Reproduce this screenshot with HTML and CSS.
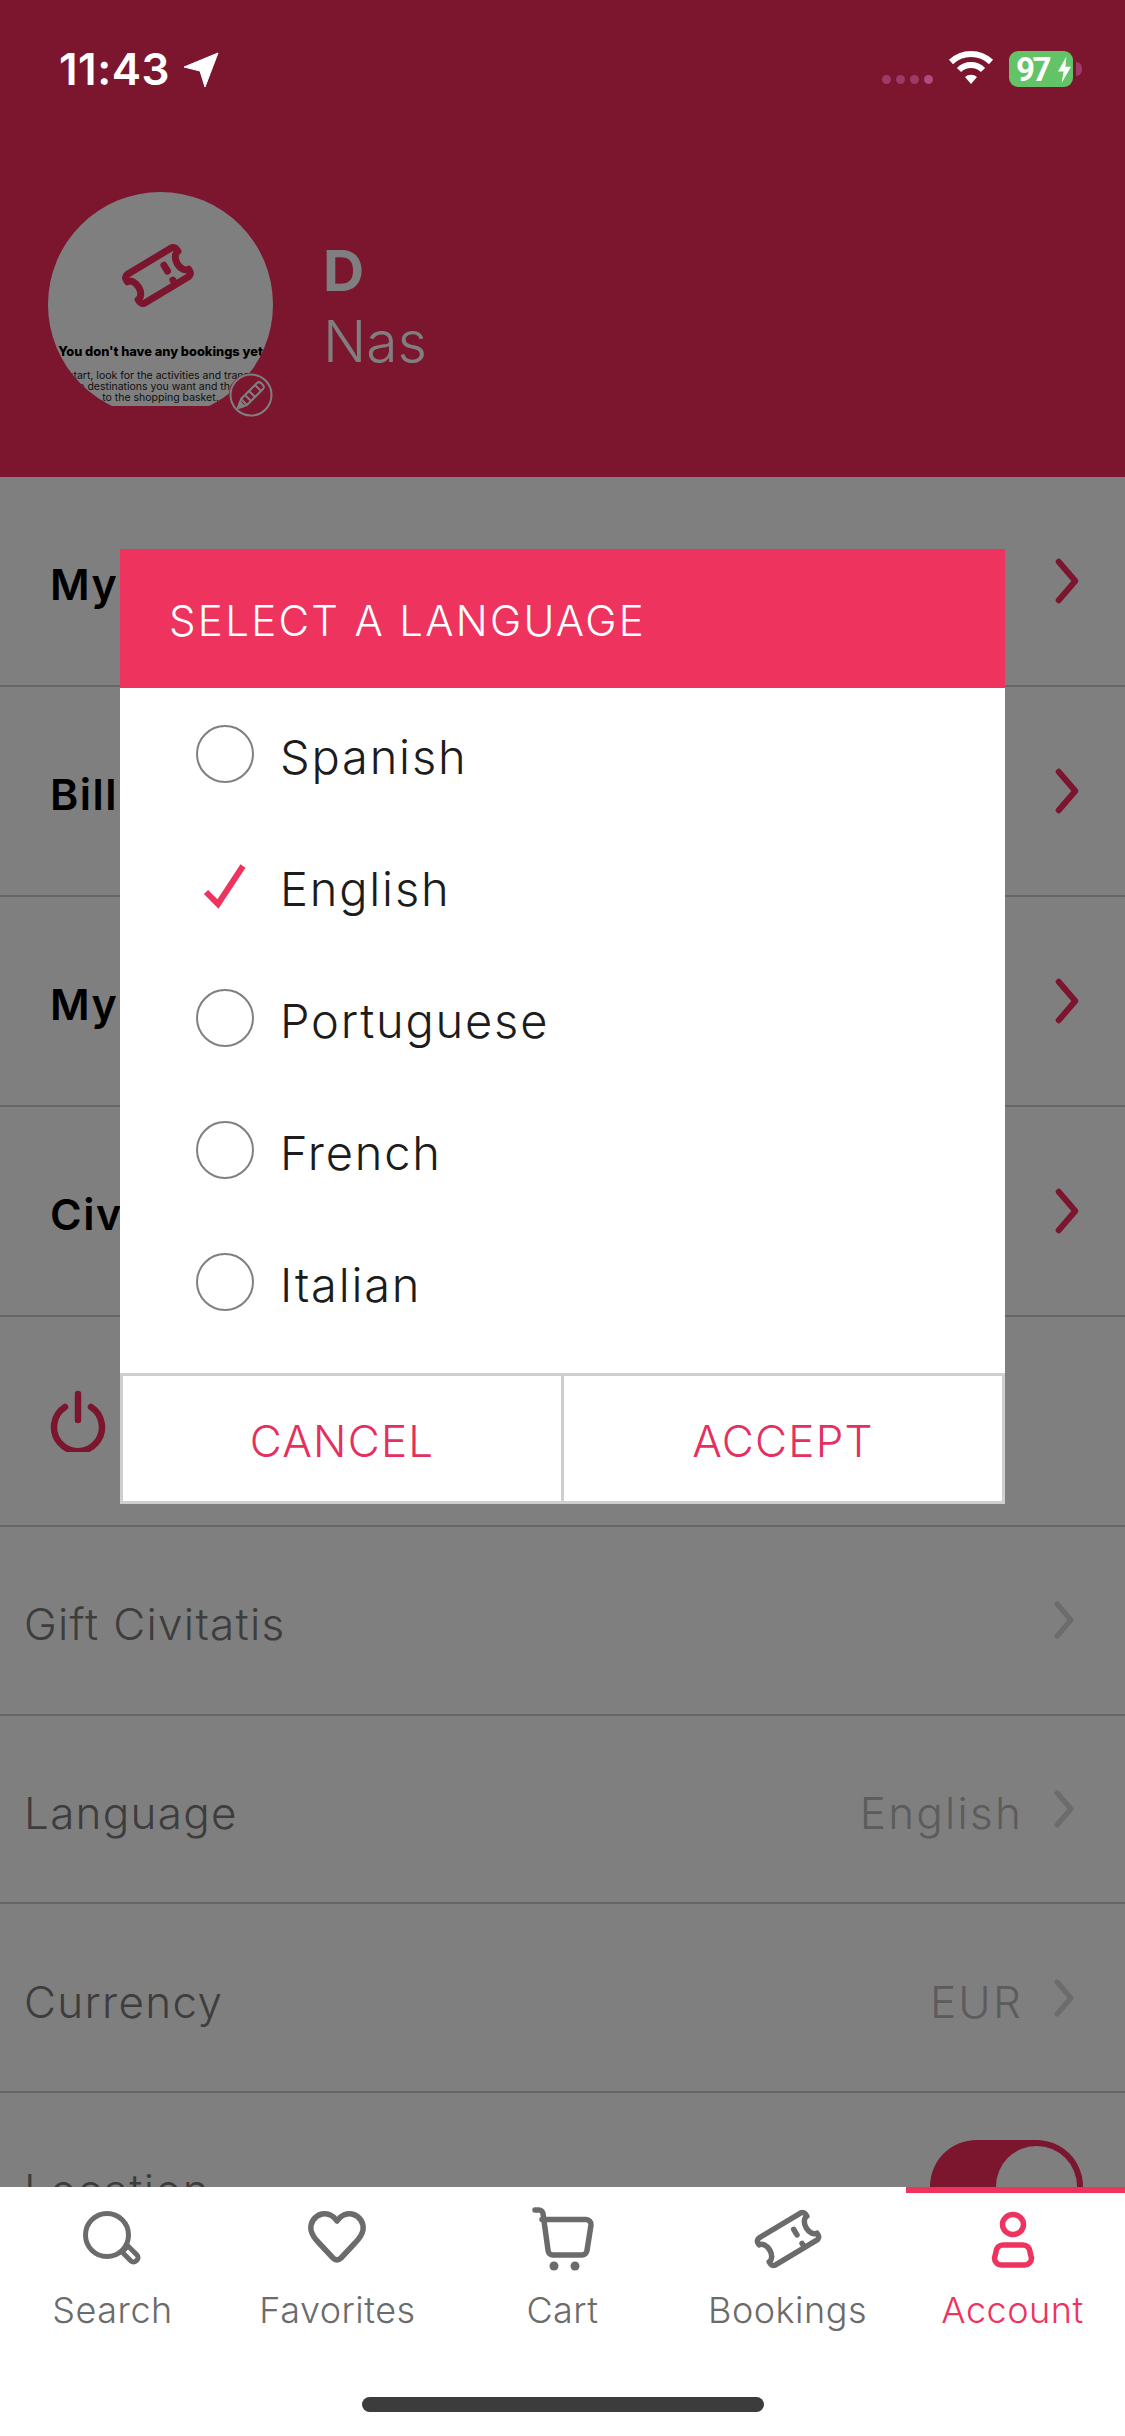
FILE: index.html
```html
<!DOCTYPE html>
<html lang="en">
<head>
    <meta charset="UTF-8">
    <meta name="viewport" content="width=device-width, initial-scale=1.0">
    <title>Account</title>
    <link rel="stylesheet" href="styles.css">
</head>
<body>

    <svg class="defs" width="0" height="0">
        <symbol id="ticket" viewBox="0 0 64 54">
            <g transform="rotate(-31 32 27)" fill="none" stroke="currentColor" stroke-linecap="round" stroke-linejoin="round">
                <path d="M10 12.500 H54 a3.500 3.500 0 0 1 3.500 3.500 v2 a6 9 0 0 0 0 18 v2 a3.500 3.500 0 0 1 -3.500 3.500 H10 a3.500 3.500 0 0 1 -3.500 -3.500 v-2 a6 9 0 0 0 0 -18 v-2 a3.500 3.500 0 0 1 3.500 -3.500 Z"/>
                <path d="M41 22 v6 M41 37 v1"/>
            </g>
        </symbol>
        <symbol id="chevron" viewBox="0 0 26 50">
            <path d="M4 4 L22 25 L4 46" fill="none" stroke="currentColor" stroke-linecap="round" stroke-linejoin="round"/>
        </symbol>
    </svg>

    <div class="screen">
        <div class="content">
            <!-- Cabecera con la foto -->
            <div class="profile">
                <div class="avatar-wrap">
                    <div class="avatar">
                        <div class="avatar-shot">
                            <svg class="avatar-ticket"><use href="#ticket"/></svg>
                            <div class="avatar-title">You don't have any bookings yet</div>
                            <div class="avatar-text">To start, look for the activities and transfers<br>in the destinations you want and then add<br>to the shopping basket.</div>
                        </div>
                    </div>
                    <div class="avatar-edit">
                        <svg viewBox="0 0 44 44" width="44" height="44" fill="none" stroke="currentColor" stroke-width="2" stroke-linejoin="round">
                            <circle cx="22" cy="22" r="20.500"/>
                            <path d="M9 35 L12 26 L28 10 a3 3 0 0 1 4 0 l2 2 a3 3 0 0 1 0 4 L18 32 Z"/>
                            <path d="M12 26 L18 32 M16 22 L22 28 M20 18 L26 24 M26 12 L32 18"/>
                            <path d="M9 35 L11 29 L15 33 Z" fill="currentColor"/>
                        </svg>
                    </div>
                </div>
                <div class="profile-name">
                    <div class="first-name">D</div>
                    <div class="last-name">Nas</div>
                </div>
            </div>

            <!-- Menu principal -->
            <div class="row-big"><span>My data</span><svg class="chev-big"><use href="#chevron"/></svg></div>
            <div class="row-big"><span>Billing data</span><svg class="chev-big"><use href="#chevron"/></svg></div>
            <div class="row-big"><span>My trips</span><svg class="chev-big"><use href="#chevron"/></svg></div>
            <div class="row-big"><span>Civitatis</span><svg class="chev-big"><use href="#chevron"/></svg></div>
            <div class="row-big">
                <svg class="power" viewBox="0 0 56 62" fill="none" stroke="currentColor" stroke-width="6.500" stroke-linecap="round">
                    <path d="M15 17 A24 24 0 1 0 41 17"/>
                    <path d="M28 4 V30"/>
                </svg>
            </div>

            <!-- Ajustes -->
            <div class="row-small"><span>Gift Civitatis</span><svg class="chev-small"><use href="#chevron"/></svg></div>
            <div class="row-small"><span>Language</span><div class="row-right"><span class="row-value">English</span><svg class="chev-small"><use href="#chevron"/></svg></div></div>
            <div class="row-small"><span>Currency</span><div class="row-right"><span class="row-value">EUR</span><svg class="chev-small"><use href="#chevron"/></svg></div></div>
            <div class="row-small"><span>Location</span><div class="toggle"><div class="toggle-knob"></div></div></div>
        </div>

        <!-- Fondo oscuro y dialogo -->
        <div class="overlay">
            <div class="status-bar">
                <div class="status-left">
                    <span class="time">11:43</span>
                    <svg class="arrow" viewBox="0 0 36 36"><path d="M35 1 L22 35 L17 19 L1 15 Z" fill="#fff" stroke="#fff" stroke-width="1" stroke-linejoin="round"/></svg>
                </div>
                <div class="status-right">
                    <div class="signal"><i></i><i></i><i></i><i class="on"></i></div>
                    <svg class="wifi" viewBox="0 0 46 34" fill="none" stroke="#fff" stroke-width="6">
                        <path d="M3 11 A29 29 0 0 1 43 11"/>
                        <path d="M11 19 A17 17 0 0 1 35 19"/>
                        <path d="M17 26 L23 33 L29 26 A9 9 0 0 0 17 26 Z" fill="#fff" stroke="none"/>
                    </svg>
                    <div class="battery">
                        <span>97</span>
                        <svg viewBox="0 0 16 28" width="15" height="27"><path d="M10 0 L1 16 H7 L5 28 L15 11 H9 Z" fill="#fff"/></svg>
                    </div>
                    <div class="battery-nub"></div>
                </div>
            </div>

            <div class="dialog">
                <div class="dialog-head">SELECT A LANGUAGE</div>
                <div class="options">
                    <div class="option"><div class="radio"></div><span>Spanish</span></div>
                    <div class="option">
                        <div class="radio-checked">
                            <svg viewBox="0 0 44 46" width="44" height="46"><path d="M3 29 L15 41 L40 3" fill="none" stroke="#ee335e" stroke-width="6"/></svg>
                        </div>
                        <span>English</span>
                    </div>
                    <div class="option"><div class="radio"></div><span>Portuguese</span></div>
                    <div class="option"><div class="radio"></div><span>French</span></div>
                    <div class="option"><div class="radio"></div><span>Italian</span></div>
                </div>
                <div class="dialog-buttons">
                    <div class="dialog-btn">CANCEL</div>
                    <div class="dialog-btn">ACCEPT</div>
                </div>
            </div>
        </div>

        <!-- Barra inferior -->
        <div class="tabbar">
            <div class="tab">
                <svg class="tab-icon" viewBox="0 0 72 64" fill="none" stroke="currentColor" stroke-width="5">
                    <circle cx="30" cy="28" r="21.500"/>
                    <path d="M45 45 L51 39 L60 48 a3.500 3.500 0 0 1 0 5 l-1 1 a3.500 3.500 0 0 1 -5 0 Z" stroke-linejoin="round"/>
                </svg>
                <span>Search</span>
            </div>
            <div class="tab">
                <svg class="tab-icon icon-left" viewBox="0 0 72 64" fill="none" stroke="currentColor" stroke-width="5.500" stroke-linejoin="round">
                    <path d="M36 14 C32 8 26 6 21 7 C13 9 9 16 10 23 C11 28 14 32 18 36 L32 51 C34.500 53.500 37.500 53.500 40 51 L54 36 C58 32 61 28 62 23 C63 16 59 9 51 7 C46 6 40 8 36 14 Z"/>
                </svg>
                <span>Favorites</span>
            </div>
            <div class="tab">
                <svg class="tab-icon" viewBox="0 0 72 64" fill="none" stroke="currentColor" stroke-width="5.500" stroke-linecap="round" stroke-linejoin="round">
                    <path d="M8 3 H12 a4 4 0 0 1 4 3.500 L21 43 a5 5 0 0 0 5 5 H55 a5 5 0 0 0 5 -4.500 L64 18 a5 5 0 0 0 -5 -5.500 H15"/>
                    <circle cx="27" cy="59" r="4.500" fill="currentColor" stroke="none"/>
                    <circle cx="48" cy="59" r="4.500" fill="currentColor" stroke="none"/>
                </svg>
                <span>Cart</span>
            </div>
            <div class="tab">
                <svg class="tab-icon ticket-tab" viewBox="0 0 72 64"><use href="#ticket" x="1" y="2.500" width="70" height="59"/></svg>
                <span>Bookings</span>
            </div>
            <div class="tab active">
                <svg class="tab-icon" viewBox="0 0 72 64" fill="none" stroke="currentColor" stroke-width="5.500" stroke-linejoin="round">
                    <ellipse cx="36" cy="17.500" rx="10.500" ry="10"/>
                    <path d="M26 38 H46 a7 7 0 0 1 7 7 l1.500 6 a7 7 0 0 1 -7 7 H24.500 a7 7 0 0 1 -7 -7 L19 45 a7 7 0 0 1 7 -7 Z"/>
                </svg>
                <span>Account</span>
            </div>
            <div class="home-bar"></div>
        </div>
    </div>

</body>
</html>
```

FILE: styles.css
```css
body {
    margin: 0;
    background-color: #fff;
    font-family: Inter, "Liberation Sans", sans-serif;
    overflow: hidden;
}

.defs {
    position: absolute;
}

.screen {
    position: relative;
    width: 1125px;
    height: 2436px;
    overflow: hidden;
    display: flex;
    flex-direction: column;
}

.content {
    height: 2187px;
    overflow: hidden;
    background-color: #fff;
}

/* Cabecera */
.profile {
    height: 477px;
    box-sizing: border-box;
    padding: 192px 0 0 48px;
    background-color: #f82a5c;
    display: flex;
    align-items: flex-start;
    gap: 50px;
}

.avatar-wrap {
    position: relative;
    width: 225px;
    height: 225px;
}

.avatar {
    width: 225px;
    height: 225px;
    border-radius: 50%;
    overflow: hidden;
}

.avatar-shot {
    height: 214px;
    background-color: #fff;
    display: flex;
    flex-direction: column;
    align-items: center;
    color: #000;
    white-space: nowrap;
}

.avatar-ticket {
    width: 74px;
    height: 63px;
    margin: 52px 0 0 -5px;
    color: #f82a5c;
    stroke-width: 6;
}

.avatar-title {
    margin-top: 36px;
    font-size: 12.800px;
    font-weight: 800;
    line-height: 18px;
}

.avatar-text {
    margin-top: 9px;
    font-size: 10.500px;
    line-height: 11px;
    text-align: center;
    color: #222;
}

.avatar-edit {
    position: absolute;
    right: 0;
    bottom: 0;
    width: 44px;
    height: 44px;
    background-color: #f82a5c;
    border-radius: 50%;
    color: #fff;
}

.profile-name {
    margin-top: 43px;
    color: #fff;
    font-size: 57px;
    line-height: 71px;
}

.first-name {
    font-weight: 700;
}

.last-name {
    font-weight: 300;
}

/* Filas */
.row-big {
    height: 210px;
    box-sizing: border-box;
    padding: 0 46px 0 50px;
    background-color: #fff;
    border-bottom: 2px solid #ccc;
    display: flex;
    align-items: center;
    justify-content: space-between;
    font-size: 43px;
    font-weight: 600;
    letter-spacing: 1.500px;
    color: #000;
}

.row-big span {
    padding-top: 5px;
}

.chev-big {
    width: 24px;
    height: 46px;
    color: #f82a5c;
    stroke-width: 6.500;
}

.power {
    width: 56px;
    height: 62px;
    color: #f82a5c;
}

.row-small {
    height: 188.700px;
    box-sizing: border-box;
    padding: 0 50px 0 24px;
    background-color: #fff;
    border-bottom: 2px solid #ccc;
    display: flex;
    align-items: center;
    justify-content: space-between;
    font-size: 44px;
    font-weight: 300;
    letter-spacing: 1.300px;
    color: #7a7a7a;
}

.row-small > span,
.row-value {
    padding-top: 8px;
}

.row-right {
    display: flex;
    align-items: center;
    gap: 30px;
}

.row-value {
    color: #b8b8b8;
    letter-spacing: 2.200px;
}

.chev-small {
    width: 22px;
    height: 38px;
    color: #d8d8d8;
    stroke-width: 7;
}

.toggle {
    width: 153px;
    height: 93px;
    margin-right: -8px;
    box-sizing: border-box;
    padding: 6px;
    border-radius: 47px;
    background-color: #f82a5c;
    display: flex;
    justify-content: flex-end;
}

.toggle-knob {
    width: 81px;
    height: 81px;
    border-radius: 50%;
    background-color: #fff;
}

/* Fondo oscuro */
.overlay {
    position: absolute;
    top: 0;
    left: 0;
    width: 1125px;
    height: 2187px;
    background-color: rgba(0, 0, 0, 0.5);
}

.status-bar {
    height: 110px;
    box-sizing: border-box;
    padding: 0 43px 0 59px;
    display: flex;
    justify-content: space-between;
    color: #fff;
}

.status-left {
    display: flex;
    align-items: flex-start;
    gap: 13px;
    padding-top: 43px;
}

.time {
    font-size: 44px;
    font-weight: 600;
    line-height: 52px;
    letter-spacing: 0.5px;
}

.arrow {
    width: 36px;
    height: 36px;
    margin-top: 9px;
}

.status-right {
    display: flex;
    align-items: flex-start;
    padding-top: 51px;
}

.signal {
    display: flex;
    gap: 5px;
    margin: 24px 15px 0 0;
}

.signal i {
    width: 9px;
    height: 9px;
    border-radius: 50%;
    background-color: #9c3a68;
}

.signal i.on {
    background-color: #b04a80;
}

.wifi {
    width: 46px;
    height: 34px;
    margin-right: 15px;
}

.battery {
    width: 64px;
    height: 36px;
    box-sizing: border-box;
    padding-left: 7px;
    border-radius: 9px;
    background-color: #62c466;
    display: flex;
    align-items: center;
    gap: 8px;
    font-family: Roboto, sans-serif;
    font-size: 33px;
    font-weight: 700;
    letter-spacing: -2.500px;
}

.battery svg {
    flex-shrink: 0;
}

.battery-nub {
    width: 6px;
    height: 14px;
    margin: 11px 0 0 3px;
    border-radius: 0 7px 7px 0;
    background-color: #a03a6a;
}

/* Dialogo */
.dialog {
    width: 885px;
    margin: 439px 0 0 120px;
    background-color: #fff;
}

.dialog-head {
    height: 139px;
    box-sizing: border-box;
    padding-left: 49px;
    background-color: #ee335e;
    color: #fff;
    font-size: 42px;
    font-weight: 300;
    letter-spacing: 2.300px;
    line-height: 143px;
}

.options {
    padding-bottom: 25px;
}

.option {
    height: 132px;
    box-sizing: border-box;
    padding-left: 76px;
    display: flex;
    align-items: center;
    gap: 26px;
    font-size: 47px;
    font-weight: 300;
    letter-spacing: 1.800px;
    color: #1c1c1c;
}

.option span {
    padding-top: 5px;
}

.radio {
    width: 58px;
    height: 58px;
    box-sizing: border-box;
    border: 2px solid #808080;
    border-radius: 50%;
}

.radio-checked {
    width: 58px;
    height: 58px;
    display: flex;
    align-items: center;
    justify-content: center;
}

.dialog-buttons {
    height: 131px;
    display: flex;
}

.dialog-btn {
    flex: 1;
    box-sizing: border-box;
    border: 3px solid #cfcfcf;
    border-right-width: 0;
    padding-top: 4px;
    display: flex;
    align-items: center;
    justify-content: center;
    font-size: 44px;
    font-weight: 300;
    letter-spacing: 1.200px;
    color: #e5305f;
}

.dialog-btn:last-child {
    border-right-width: 3px;
}

/* Barra inferior */
.tabbar {
    position: relative;
    height: 249px;
    background-color: #fff;
    display: flex;
}

.tab {
    position: relative;
    width: 225px;
    height: 249px;
    box-sizing: border-box;
    padding-top: 20px;
    display: flex;
    flex-direction: column;
    align-items: center;
    color: #6b6b6b;
    font-size: 36px;
    font-weight: 300;
    letter-spacing: 0.500px;
}

.tab span {
    margin-top: 15px;
    line-height: 48px;
}

.tab-icon {
    width: 72px;
    height: 64px;
}

.icon-left {
    margin-left: -2px;
}

.ticket-tab {
    stroke-width: 5;
}

.tab.active {
    color: #ee335e;
}

.tab.active::before {
    content: "";
    position: absolute;
    top: 0;
    left: 6px;
    right: 0;
    height: 6px;
    background-color: #ee335e;
}

.home-bar {
    position: absolute;
    left: 362px;
    bottom: 24px;
    width: 402px;
    height: 15px;
    border-radius: 8px;
    background-color: #3c3c3c;
}
```
